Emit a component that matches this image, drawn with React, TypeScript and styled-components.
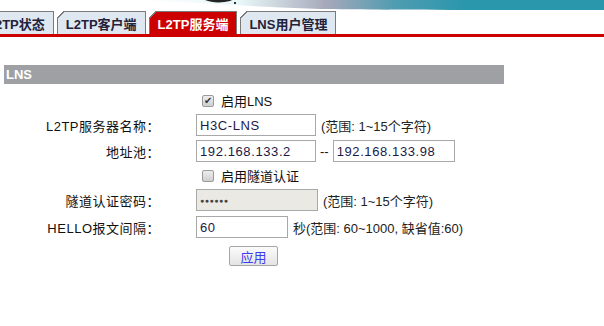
import React from 'react';
import styled, { createGlobalStyle } from 'styled-components';

const GlobalStyle = createGlobalStyle`
  body {
    margin: 0;
    background: #fff;
    font-family: "Liberation Sans", Arial, "Noto Sans CJK SC", sans-serif;
    font-size: 12px;
    color: #111;
  }
`;

const Page = styled.div`
  width: 604px;
  height: 326px;
  overflow: hidden;
`;

const Banner = styled.svg`
  display: block;
  width: 604px;
  height: 11px;
`;

const TabBar = styled.div`
  display: flex;
  align-items: flex-end;
  gap: 3px;
  height: 23px;
  margin-top: 0;
`;

const Tab = styled.div<{ $active?: boolean; $shift?: number }>`
  position: relative;
  box-sizing: border-box;
  height: 23px;
  padding: 0 8px;
  margin-left: ${(p) => p.$shift ?? 0}px;
  display: flex;
  align-items: center;
  border: 1px solid #7a7a7a;
  border-bottom: none;
  background: ${(p) => (p.$active ? '#cc0000' : '#dfe7f1')};
  color: ${(p) => (p.$active ? '#fff' : '#22223a')};
  font-weight: bold;
  font-size: 13px;
  white-space: nowrap;

  &::before {
    content: '';
    position: absolute;
    top: -1px;
    left: -1px;
    width: 7px;
    height: 7px;
    background: linear-gradient(135deg, #fff 44%, #7a7a7a 44%, #7a7a7a 58%, transparent 58%);
  }
`;

const RedLine = styled.div`
  height: 3px;
  background: #cc0000;
`;

const Section = styled.div`
  margin: 28px 0 0 4px;
  width: 500px;
`;

const SectionHead = styled.div`
  height: 19px;
  line-height: 19px;
  background: #9ea0a3;
  color: #fff;
  font-weight: bold;
  font-size: 13px;
  padding-left: 2px;
`;

const Form = styled.div`
  display: grid;
  grid-template-columns: 192px 1fr;
  align-items: center;
  margin-top: 8px;
`;

const Label = styled.div<{ $top?: number }>`
  text-align: right;
  padding-right: 36px;
  margin-top: ${(p) => p.$top ?? 0}px;
  font-size: 13px;
  letter-spacing: 0.5px;
`;

const Field = styled.div<{ $top?: number }>`
  display: flex;
  align-items: center;
  margin-top: ${(p) => p.$top ?? 0}px;
  font-size: 13px;
  white-space: nowrap;
`;

const CheckRow = styled.label`
  display: flex;
  align-items: center;
  gap: 7px;
  height: 17px;
  margin-left: 6px;
  font-size: 13px;
`;

const Box = styled.span<{ $checked?: boolean }>`
  box-sizing: border-box;
  width: 12px;
  height: 12px;
  border: 1px solid #9a9a9a;
  border-radius: 2px;
  background: linear-gradient(#eeeeee, #cfcfcf);
  display: flex;
  align-items: center;
  justify-content: center;
  font-size: 10px;
  line-height: 1;
  color: #333;
`;

const TextInput = styled.input<{ $w: number }>`
  box-sizing: border-box;
  width: ${(p) => p.$w}px;
  height: 22px;
  border: 1px solid #a8a8a8;
  padding: 0 3px;
  margin: 0;
  font-family: "Liberation Sans", Arial, sans-serif;
  font-size: 13px;
  letter-spacing: 0.6px;
  color: #1a1a48;
  background: #fff;
  outline: none;
`;

const Dots = styled.span`
  box-sizing: border-box;
  width: 122px;
  height: 22px;
  border: 1px solid #a8a8a8;
  background: #ebe9e3;
  padding-left: 3px;
  display: flex;
  align-items: center;
  font-size: 7px;
  letter-spacing: 0.5px;
  color: #444;
`;

const Hint = styled.span<{ $gap?: number }>`
  margin-left: ${(p) => p.$gap ?? 5}px;
  color: #222;
`;

const Dash = styled.span`
  margin: 0 4px;
`;

const ApplyButton = styled.button`
  box-sizing: border-box;
  width: 49px;
  height: 20px;
  margin-left: 33px;
  padding: 0;
  border: 1px solid #a5a5a5;
  border-radius: 2px;
  background: linear-gradient(#fbfbfb, #e4e4e4);
  color: #3b3bf0;
  font-family: "Liberation Sans", Arial, "Noto Sans CJK SC", sans-serif;
  font-size: 13px;
`;

export default function App() {
  return (
    <Page>
      <GlobalStyle />
      <Banner viewBox="0 0 604 11" preserveAspectRatio="none">
        <defs>
          <linearGradient id="bn" x1="0" x2="1" y1="0" y2="0">
            <stop offset="0" stopColor="#ffffff" />
            <stop offset="0.22" stopColor="#e6f6f7" />
            <stop offset="0.4" stopColor="#a7a9bb" />
            <stop offset="0.55" stopColor="#4f9cb0" />
            <stop offset="0.7" stopColor="#2b97ad" />
            <stop offset="1" stopColor="#2b97ad" />
          </linearGradient>
        </defs>
        <path d="M140 0 L604 0 L604 10 C500 10 360 10 320 9 C260 7 200 3 140 0 Z" fill="url(#bn)" />
        <path d="M205 0 C212 3 222 3 230 1 L232 0 Z" fill="#222" />
        <rect x="234" y="2" width="2" height="2" fill="#333" />
      </Banner>
      <TabBar>
        <Tab $shift={-22}>L2TP状态</Tab>
        <Tab>L2TP客户端</Tab>
        <Tab $active>L2TP服务端</Tab>
        <Tab>LNS用户管理</Tab>
      </TabBar>
      <RedLine />
      <Section>
        <SectionHead>LNS</SectionHead>
        <Form>
          <Label />
          <Field>
            <CheckRow>
              <Box $checked>✔</Box>
              启用LNS
            </CheckRow>
          </Field>

          <Label $top={5}>L2TP服务器名称：</Label>
          <Field $top={5}>
            <TextInput $w={120} defaultValue="H3C-LNS" />
            <Hint>(范围: 1~15个字符)</Hint>
          </Field>

          <Label $top={4}>地址池：</Label>
          <Field $top={4}>
            <TextInput $w={120} defaultValue="192.168.133.2" />
            <Dash>--</Dash>
            <TextInput $w={122} defaultValue="192.168.133.98" />
          </Field>

          <Label $top={5} />
          <Field $top={5}>
            <CheckRow>
              <Box />
              启用隧道认证
            </CheckRow>
          </Field>

          <Label $top={5}>隧道认证密码：</Label>
          <Field $top={5}>
            <Dots>●●●●●●</Dots>
            <Hint>(范围: 1~15个字符)</Hint>
          </Field>

          <Label $top={5}>HELLO报文间隔：</Label>
          <Field $top={5}>
            <TextInput $w={92} defaultValue="60" />
            <Hint>秒(范围: 60~1000, 缺省值:60)</Hint>
          </Field>

          <Label $top={8} />
          <Field $top={8}>
            <ApplyButton>应用</ApplyButton>
          </Field>
        </Form>
      </Section>
    </Page>
  );
}
